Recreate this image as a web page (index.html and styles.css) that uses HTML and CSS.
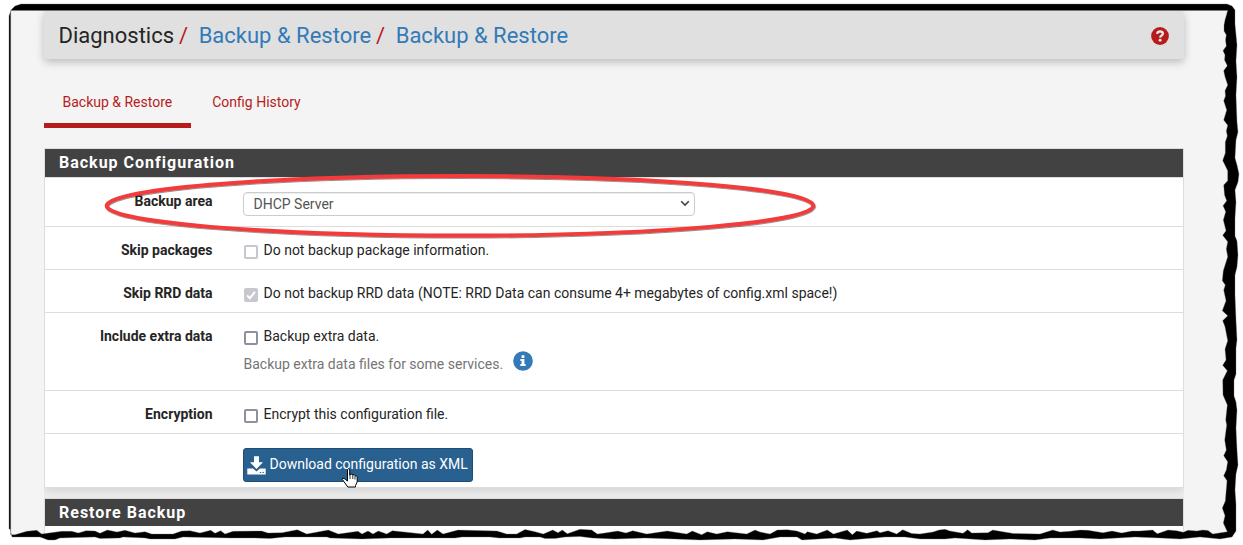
FILE: index.html
```html
<!DOCTYPE html>
<html lang="en">
<head>
<meta charset="utf-8">
<title>Diagnostics: Backup &amp; Restore</title>
<link rel="stylesheet" href="styles.css">
</head>
<body>
<div class="capture">
  <header class="page-header">
    <h1 class="crumbs"><span class="root">Diagnostics</span><span class="slash">/</span><a>Backup &amp; Restore</a><span class="slash">/</span><a>Backup &amp; Restore</a></h1>
    <svg class="help" width="18" height="18" viewBox="0 0 18 18"><circle cx="9" cy="9" r="8.900" fill="#b71c1c"/><path d="M6.100 6.800Q6.500 4.300 9.100 4.300Q12 4.500 11.900 6.700Q11.800 7.700 10.600 8.500Q9.200 9.200 9.100 10.600" fill="none" stroke="#e8e8e8" stroke-width="2.200"/><circle cx="9.100" cy="13.300" r="1.450" fill="#e8e8e8"/></svg>
  </header>
  <nav class="tabs">
    <a class="tab active">Backup &amp; Restore</a>
    <a class="tab">Config History</a>
  </nav>
  <main class="panels">
    <section class="panel">
      <h2 class="panel-title">Backup Configuration</h2>
      <div class="row row-area"><div class="label">Backup area</div>
        <div class="field"><div class="select"><span>DHCP Server</span><svg width="10" height="7" viewBox="0 0 10 7"><path d="M1.200 1.200L5 5L8.800 1.200" fill="none" stroke="#444" stroke-width="1.600"/></svg></div></div></div>
      <div class="row"><div class="label">Skip packages</div>
        <div class="field check"><span class="box disabled"></span>Do not backup package information.</div></div>
      <div class="row"><div class="label">Skip RRD data</div>
        <div class="field check"><span class="box checked"><svg width="14" height="14" viewBox="0 0 14 14"><path d="M3 7.400L5.800 10.200L11 3.800" fill="none" stroke="#fff" stroke-width="2"/></svg></span>Do not backup RRD data (NOTE: RRD Data can consume 4+ megabytes of config.xml space!)</div></div>
      <div class="row row-extra"><div class="label">Include extra data</div>
        <div class="field"><div class="check"><span class="box"></span>Backup extra data.</div>
          <div class="hint"><span>Backup extra data files for some services.</span><svg class="info" width="20" height="20" viewBox="0 0 20 20"><circle cx="10" cy="10" r="9.800" fill="#337ab7"/><path d="M8.600 4.300h2.800v2.600H8.600zM7.400 8.100h4v5h1.200v1.800H7.400v-1.800h1.200V9.900H7.400z" fill="#fff"/></svg></div></div></div>
      <div class="row"><div class="label">Encryption</div>
        <div class="field check"><span class="box"></span>Encrypt this configuration file.</div></div>
      <div class="row row-action"><div class="label"></div>
        <div class="field"><button class="download"><svg width="19" height="19" viewBox="0 0 19 19"><path d="M7 .3h5v6h4L9.500 13L3 6.300h4z" fill="#fff"/><path d="M.3 12.500H6L9.500 15.500L13 12.500H18.700V18.600H.3z" fill="#fff"/><path d="M12.800 16h1.400v1h-1.400zM15.500 16h1.400v1h-1.400z" fill="#286090"/></svg><span>Download configuration as XML</span></button></div></div>
    </section>
    <section class="panel panel-next">
      <h2 class="panel-title">Restore Backup</h2>
    </section>
  </main>
</div>
<svg class="overlay" width="1243" height="545" viewBox="0 0 1243 545">
  <defs>
    <filter id="soft" x="-5%" y="-20%" width="110%" height="140%"><feDropShadow dx=".7" dy=".8" stdDeviation=".6" flood-color="#000" flood-opacity=".55"/></filter>
  </defs>
  <ellipse cx="460" cy="205.800" rx="353.300" ry="29.800" fill="none" stroke="#f43b3b" stroke-width="4" filter="url(#soft)"/>
  <!-- hand pointer -->
  <path d="M347.500 469.500Q348.500 468 349.700 469.500V475L351 474Q352.200 473.700 352.800 475Q354.200 474 355 475.700Q356.500 475 357.200 477V482L355.500 485.500V487H347.800L343.500 481Q341.500 479.500 342.500 478.500Q344 477.800 345.500 479.500L347.500 481Z" fill="#fff" stroke="#000" stroke-width="1"/>
  <path d="M350 475v4M352.800 475v4M355 476v3.500" stroke="#000" stroke-width=".8"/>
  <!-- torn paper edge: white surround, then the black band -->
  <path class="surround" d="M0 0H1243V545H0Z M9 16V529H10L12 537H40L48 540H55L60 538L95 537L100 538.500L120 538L123 537L145 538L150 539H175L183 537L230 538L255 538L270 538.500L285 537H327L330 538L362 539L390 538H455L462 537H490L499 538H520L525 537H540L545 538.500H555L565 537L580 536.500L592 538L615 539L645 538L675 539L700 540L735 539L763 540L780 537L797 537L802 540L835 538L850 540L885 537H905L920 539H945L955 538L985 540L1010 539L1035 540L1050 538L1080 538L1100 539L1135 537L1160 538L1180 539L1200 537L1220 539L1232 537L1236 531V504L1235 490L1236 474L1238 465L1237 450L1236 428L1237 410L1236 402L1234 396V380L1236 374V348L1237 340L1236 320L1235 295V275L1237 267L1238 255L1237 241L1235 236V218L1236 202L1235 190L1238 182L1239 174L1237 165L1235 158L1236 140L1238 132L1237 122L1236 95L1237 77L1236 61L1237 45L1235 24V10L1232 6L1227 4H21L15 6L11 10Z"/>
  <path d="M9 16V529H10L12 537H40L48 540H55L60 538L95 537L100 538.500L120 538L123 537L145 538L150 539H175L183 537L230 538L255 538L270 538.500L285 537H327L330 538L362 539L390 538H455L462 537H490L499 538H520L525 537H540L545 538.500H555L565 537L580 536.500L592 538L615 539L645 538L675 539L700 540L735 539L763 540L780 537L797 537L802 540L835 538L850 540L885 537H905L920 539H945L955 538L985 540L1010 539L1035 540L1050 538L1080 538L1100 539L1135 537L1160 538L1180 539L1200 537L1220 539L1232 537L1236 531V504L1235 490L1236 474L1238 465L1237 450L1236 428L1237 410L1236 402L1234 396V380L1236 374V348L1237 340L1236 320L1235 295V275L1237 267L1238 255L1237 241L1235 236V218L1236 202L1235 190L1238 182L1239 174L1237 165L1235 158L1236 140L1238 132L1237 122L1236 95L1237 77L1236 61L1237 45L1235 24V10L1232 6L1227 4H21L15 6L11 10Z
  M10.700 10.500H1227.700L1225 20L1224 25V31L1226.300 35L1225.500 40L1226.300 46L1223 50.700L1225 55L1224.500 60L1227.300 65.700L1223.700 70.700L1225 76.700L1227.700 85L1225 90.700L1225.500 96L1223.700 100.700L1226.700 110L1223.700 120L1227.700 125.300L1226.300 131L1227.300 136L1225.300 142V153L1222.700 160.500L1227.700 170.700V180.700L1223.700 185L1224.500 195L1226.700 200.700L1223 205.700L1225.700 211.700L1223.300 220L1226 230.700L1222.700 235.300L1227.700 241.700L1226.300 249L1227.700 256.700L1223.300 270.700L1222.300 280.700L1225.300 285L1223.700 290L1226 300.700L1222.300 310.700L1227.700 315.700L1222.700 320.700L1225 326.700L1227.700 340.700L1225 349L1226 360L1222.700 365.300L1227.300 370.700L1222.700 380L1223 395L1227.300 405L1225.700 420L1226.700 425L1224.700 440L1226.300 450L1223.700 455.700L1227.700 461.700L1226.300 470L1223.700 475.700L1227 480.700L1225.300 501L1222.300 508L1225 515.700L1223.300 523L1227.300 531.700
  L1212.700 534L1208 530.500L1202.700 530L1196.700 531L1188 530.300L1183.300 532.300L1176.700 530.700L1168 530L1157.300 533.700L1152.700 530L1140 531L1132 531L1121.700 533L1112 531L1103 532.700L1088 530.300L1080 530L1070 531.300L1060 532L1052.700 530L1040 534L1013.300 533.500L992.700 530L988 532.700L971.700 533L967.700 529.700L963 533.300L950 531L945 529.300L939 530L933 532L920 534L911.700 533.500L902.700 529.700L896.700 534L888 530.700L880 532.700L877 530.700L866.700 533.300L856.700 531L852.300 534.700L847.300 530L833.300 534L827.300 530L816.700 534L807.300 531.700L805 534L797 531L787.300 529.700L777.300 530L770 534L760 532L755 530L746.700 534L727.300 531.700L716.700 534L707.300 531.700L701.700 534.700L692.300 531L686.700 534L667.300 531L646.700 534L632.700 530.700L626 533L617.700 531L603 533.300L597.300 534L591.700 530L580 529.300L567.300 533.700L562.300 530L558 532.700L552.700 530L543.300 534L535 531.700L525 529.500L516.700 534H506.700L497 531L458 530L443 534L437.300 530L431.700 534.300L427.700 530L423 534L392.300 530.700L386.700 534L378.300 531L373 534L368 531L362 534L358 531.300L338.300 534L328.300 530L306.700 534L297.300 529.700L282 532.700L268 533L261.700 531L233 531.300L225 534L220.700 530.700L215 533.300L210.700 530.300L200 533L190 530.700L181.700 531L173 534H151.700L145 531.700L135 533L125 530.300L117 532L107.300 530L100 533.300L95 531L86 530.700L78.300 533L71.700 531.300H61.700L41.700 534L36.700 530.300L26.700 531.300L15 534.700H10.700Z" fill="#000" fill-rule="evenodd" stroke="#777" stroke-width=".35"/>
</svg>
</body>
</html>
```
FILE: styles.css
```css
* { box-sizing: border-box; }
body {
  margin: 0;
  width: 1243px;
  height: 545px;
  overflow: hidden;
  background: #fff;
  font: 14px/20px Roboto, sans-serif;
  color: #252525;
}
.capture {
  height: 538px;
  margin: 0 7px 0 10px;
  padding: 11px 52px 0 34px;
  background: #f4f4f4;
  overflow: hidden;
}
.page-header {
  width: 1140px;
  height: 48px;
  padding: 0 15.5px 0 14.5px;
  display: flex;
  align-items: center;
  justify-content: space-between;
  background: #e0e0e0;
  border-radius: 3px;
  box-shadow: 0 3px 8px rgba(0, 0, 0, .24);
}
.crumbs {
  margin: 0;
  padding-top: 2px;
  font-size: 22px;
  font-weight: 400;
  line-height: 46px;
  white-space: pre;
}
.crumbs a { color: #337ab7; }
.slash { margin: 0 10.5px 0 5px; color: #b71c1c; }
.help { margin-top: 2px; }
.tabs {
  display: flex;
  margin-top: 21px;
  gap: 3px;
}
.tab {
  height: 48px;
  padding: 12px 18.5px 0;
  color: #b71c1c;
}
.active { border-bottom: 5px solid #b71c1c; }
.panels {
  width: 1140px;
  margin-top: 20px;
  background: #efefef;
  overflow: hidden;
}
.panel {
  border: 1px solid #ddd;
  background: #fff;
  box-shadow: 0 3px 8px rgba(0, 0, 0, .12);
}
.panel-next { margin-top: 10px; height: 60px; }
.panel-title {
  margin: 0;
  height: 28px;
  padding-left: 14px;
  background: #424242;
  color: #fff;
  font-size: 16px;
  line-height: 28px;
  font-weight: 700;
  letter-spacing: 1px;
}
.panel-next .panel-title { height: 27px; }
.row {
  display: grid;
  grid-template-columns: 167.500px 1fr;
  column-gap: 30.500px;
  height: 43px;
  padding-top: 13px;
  border-top: 1px solid #ddd;
}
.row-area { height: 49px; }
.row-extra { height: 78px; }
.row-action { height: 54px; padding-top: 14px; }
.label { text-align: right; font-weight: 700; }
.check { display: flex; gap: 5.500px; padding-left: 1px; }
.box {
  flex: none;
  width: 14px;
  height: 14px;
  margin-top: 5px;
  border: 2px solid #8f8f9d;
  border-radius: 2px;
  background: #fff;
}
.disabled { border-color: #c7c7ce; }
.checked { border: 0; background: #c7c7ce; }
.checked svg { display: block; }
.select {
  display: flex;
  align-items: center;
  justify-content: space-between;
  width: 452px;
  height: 24px;
  margin-top: 1px;
  padding: 0 4px 1px 9.500px;
  border: 1px solid #ccc;
  border-radius: 4px;
  background: #fff;
  box-shadow: inset 0 1px 1px rgba(0, 0, 0, .075);
  color: #555;
}
.hint {
  display: flex;
  gap: 10px;
  margin-top: 5px;
  padding-left: .5px;
  color: #757575;
}
.hint span { padding-top: 3px; }
.info { display: block; }
.download {
  display: flex;
  align-items: center;
  gap: 3.500px;
  width: 230px;
  height: 34px;
  padding: 0 3px;
  border: 1px solid #204d74;
  border-radius: 3px;
  background: #286090;
  color: #fff;
  font: 14px/20px Roboto, sans-serif;
  white-space: nowrap;
}
.download span { padding-bottom: 2px; }
.overlay {
  position: absolute;
  top: 0;
  left: 0;
  pointer-events: none;
}
.surround { fill: #fff; fill-rule: evenodd; }
```
